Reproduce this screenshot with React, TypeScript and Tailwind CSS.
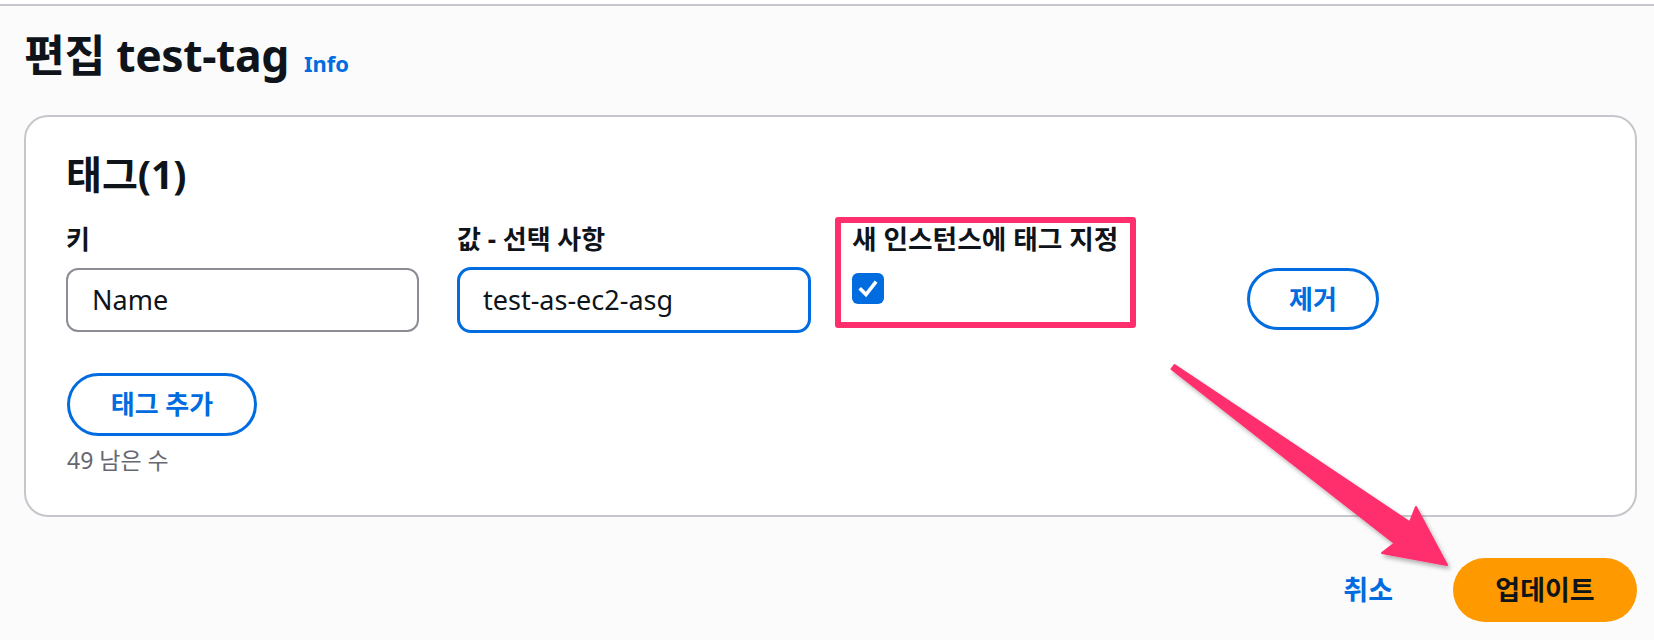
import React from "react";

const font = { fontFamily: '"Noto Sans", "Noto Sans CJK KR", sans-serif' };

function Arrow() {
  return (
    <svg
      className="absolute left-0 top-0 pointer-events-none"
      width={1654}
      height={640}
      viewBox="0 0 1654 640"
    >
      <defs>
        <filter id="sh" x="-20%" y="-20%" width="140%" height="140%">
          <feDropShadow dx="2" dy="3" stdDeviation="2" floodColor="#000" floodOpacity="0.3" />
        </filter>
      </defs>
      <polygon
        points="1174.5,365 1409.8,522.3 1416,507 1447,565 1382,553 1394.6,543.3 1171.5,369"
        fill="#ff2f6d"
        stroke="#ff2f6d"
        strokeWidth="2"
        strokeLinejoin="round"
        filter="url(#sh)"
      />
    </svg>
  );
}

export default function App() {
  return (
    <div className="relative w-[1654px] h-[640px] overflow-hidden bg-[#fbfbfb] text-[#0f141a]" style={font}>
      <div className="h-[4px] bg-white" />
      <div className="h-[2px] bg-[#c6c6cd]" />

      <div className="flex items-baseline pl-[24px] mt-[23px]">
        <h1 className="text-[44.5px] leading-[52px] font-bold tracking-[-0.4px]">편집 test-tag</h1>
        <span className="ml-[15px] text-[22px] font-bold text-[#006ce0]">Info</span>
      </div>

      <div className="ml-[24px] mr-[17px] mt-[34px] h-[402px] rounded-[24px] border-2 border-[#c6c6cd] bg-white pl-[40px] pt-[34px]">
        <h2 className="text-[39px] leading-[46px] font-bold">태그(1)</h2>

        <div className="mt-[26px] flex items-start">
          <div className="w-[353px]">
            <div className="text-[26px] leading-[32px] font-bold">키</div>
            <div className="mt-[13px] h-[64px] rounded-[12px] border-2 border-[#8c8c94] bg-white flex items-center pl-[24px] text-[27px]">
              Name
            </div>
          </div>

          <div className="ml-[38px] w-[354px]">
            <div className="text-[26px] leading-[32px] font-bold">값 - 선택 사항</div>
            <div className="mt-[12px] h-[66px] rounded-[14px] border-[3px] border-[#006ce0] bg-white flex items-center pl-[23px] text-[27px]">
              test-as-ec2-asg
            </div>
          </div>

          <div className="relative ml-[41px] w-[354px]">
            <div className="text-[26.7px] leading-[32px] font-bold">새 인스턴스에 태그 지정</div>
            <div className="mt-[18px] w-[32px] h-[31px] rounded-[6px] bg-[#006ce0] flex items-center justify-center">
              <svg width="24" height="24" viewBox="0 0 24 24">
                <polyline
                  points="5,12.5 10,17.5 19,6"
                  fill="none"
                  stroke="#fff"
                  strokeWidth="3.6"
                  strokeLinecap="square"
                  strokeLinejoin="miter"
                />
              </svg>
            </div>
            <div className="absolute left-[-17px] top-[-6px] w-[301px] h-[111px] rounded-[3px] border-[6px] border-[#ff2f6d] pointer-events-none" />
          </div>

          <button className="mt-[45px] ml-[41px] w-[132px] h-[62px] rounded-full border-[3px] border-[#006ce0] bg-white text-[26px] font-bold text-[#006ce0]">
            제거
          </button>
        </div>

        <button className="mt-[40px] ml-[1px] w-[190px] h-[63px] rounded-full border-[3px] border-[#006ce0] bg-white text-[26px] font-bold text-[#006ce0]">
          태그 추가
        </button>
        <div className="mt-[10px] ml-[1px] text-[23px] leading-[28px] text-[#656871]">49 남은 수</div>
      </div>

      <div className="flex items-center justify-end mr-[17px] mt-[41px]">
        <span className="text-[27px] font-bold text-[#006ce0] mr-[60px]">취소</span>
        <button className="w-[184px] h-[64px] rounded-full bg-[#ff9900] text-[27px] font-bold text-[#0f141a]">
          업데이트
        </button>
      </div>

      <Arrow />
    </div>
  );
}
